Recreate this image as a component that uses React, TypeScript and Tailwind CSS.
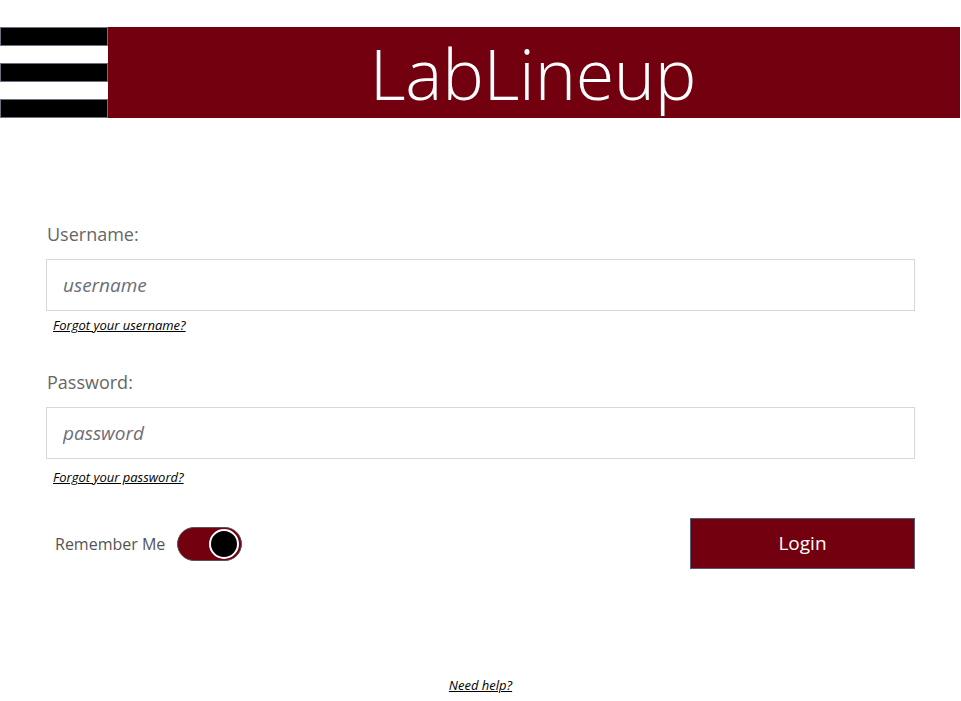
import { useState } from "react";

const font = "font-['Open_Sans','Noto_Sans',sans-serif]";

function Field({ label, placeholder, type, link, linkGap }: { label: string; placeholder: string; type: string; link: string; linkGap: string }) {
  return (
    <div className="flex flex-col">
      <label className="pl-[1px] text-[18px] leading-[24px] text-[#666]">{label}</label>
      <input
        className="mt-[13px] h-[52px] w-full border border-[#d6d6de] px-[16px] text-[19px] italic text-[#555] outline-none placeholder:text-[#6b6e7a]"
        placeholder={placeholder}
        type={type}
      />
      <a className={`ml-[7px] ${linkGap} self-start text-[13px] italic leading-[16px] text-black underline`} href="#">
        {link}
      </a>
    </div>
  );
}

export default function App() {
  const [remember, setRemember] = useState(true);

  return (
    <div className={`${font} h-[701px] w-full bg-white pt-[27px]`}>
      <header className="flex h-[91px] w-[960px]">
        <div className="flex w-[108px] flex-col justify-between">
          <span className="h-[19px] border border-[#6b7280] bg-black" />
          <span className="h-[19px] border border-[#6b7280] bg-black" />
          <span className="h-[19px] border border-[#6b7280] bg-black" />
        </div>
        <div className="flex flex-1 items-center justify-center bg-[#73000f] pr-[2px]">
          <h1 className="text-[70px] font-light leading-none tracking-[-0.3px] text-white">LabLineup</h1>
        </div>
      </header>

      <main className="mx-[46px] mt-[104px] w-[869px]">
        <Field label="Username:" placeholder="username" type="text" link="Forgot your username?" linkGap="mt-[6px]" />
        <div className="mt-[37px]">
          <Field label="Password:" placeholder="password" type="password" link="Forgot your password?" linkGap="mt-[10px]" />
        </div>

        <div className="mt-[33px] flex items-center justify-between">
          <div className="flex items-center pl-[9px] pt-[1px]">
            <span className="text-[16px] text-[#555]">Remember Me</span>
            <button
              className={`ml-[12px] flex h-[34px] w-[65px] items-center rounded-full border border-[#555] px-[2px] ${remember ? "justify-end bg-[#73000f]" : "justify-start bg-[#ccc]"}`}
              onClick={() => setRemember(!remember)}
              type="button"
            >
              <span className="h-[30px] w-[30px] rounded-full border-2 border-white bg-black" />
            </button>
          </div>
          <button className="h-[51px] w-[225px] border border-[#555a7a] bg-[#73000f] text-[19px] text-white" type="button">
            Login
          </button>
        </div>
      </main>

      <div className="mt-[107px] flex justify-center">
        <a className="text-[13px] italic text-black underline" href="#">
          Need help?
        </a>
      </div>
    </div>
  );
}
